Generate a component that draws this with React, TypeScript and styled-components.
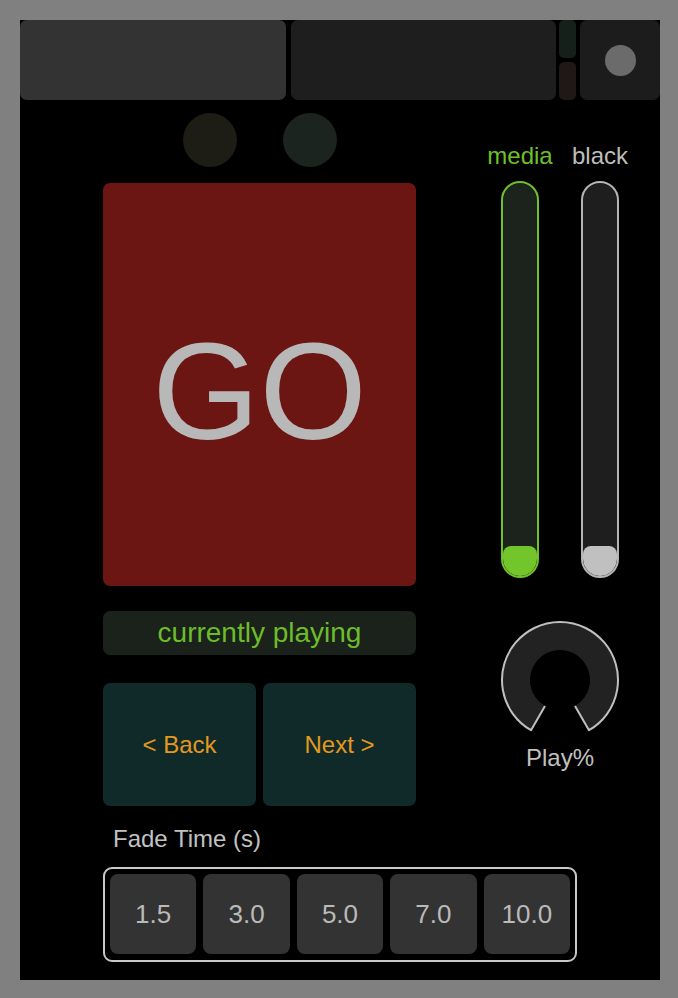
import styled, { createGlobalStyle } from "styled-components";

const GlobalStyle = createGlobalStyle`
  html, body {
    margin: 0;
    padding: 0;
    background: #808080;
  }
  body {
    font-family: "Liberation Sans", Arial, sans-serif;
  }
`;

const Panel = styled.div`
  margin: 20px;
  width: 640px;
  height: 960px;
  background: #000;
  display: flex;
  flex-direction: column;
  overflow: hidden;
`;

const TopBar = styled.div`
  display: flex;
  height: 80px;
`;

const TopBox = styled.div<{ $w: number; $bg: string; $ml?: number }>`
  width: ${(p) => p.$w}px;
  margin-left: ${(p) => p.$ml ?? 0}px;
  background: ${(p) => p.$bg};
  border-radius: 7px;
  flex-shrink: 0;
  display: flex;
  align-items: center;
  justify-content: center;
`;

const MeterStack = styled.div`
  width: 17px;
  margin-left: 3px;
  display: flex;
  flex-direction: column;
  gap: 4px;
`;

const MeterCell = styled.div<{ $bg: string }>`
  flex: 1;
  background: ${(p) => p.$bg};
  border-radius: 5px;
`;

const RecordDot = styled.div`
  width: 31px;
  height: 31px;
  border-radius: 50%;
  background: #6b6b6b;
`;

const Content = styled.div`
  display: flex;
  align-items: flex-start;
`;

const LeftCol = styled.div`
  margin-left: 83px;
  width: 313px;
  padding-top: 13px;
  display: flex;
  flex-direction: column;
`;

const Indicators = styled.div`
  display: flex;
  justify-content: center;
  gap: 46px;
`;

const Indicator = styled.div<{ $bg: string }>`
  width: 54px;
  height: 54px;
  border-radius: 50%;
  background: ${(p) => p.$bg};
`;

const GoButton = styled.button`
  margin-top: 16px;
  height: 403px;
  border: none;
  border-radius: 7px;
  background: #6b1613;
  color: #b8b8b8;
  font-family: "Liberation Sans", Arial, sans-serif;
  font-size: 138px;
  padding: 12px 0 0;
  display: flex;
  align-items: center;
  justify-content: center;
  line-height: 1;
`;

const Status = styled.div`
  margin-top: 25px;
  height: 44px;
  border-radius: 7px;
  background: #1b211b;
  color: #6cbd2a;
  font-size: 28px;
  display: flex;
  align-items: center;
  justify-content: center;
`;

const NavRow = styled.div`
  margin-top: 28px;
  height: 123px;
  display: grid;
  grid-template-columns: 1fr 1fr;
  gap: 7px;
`;

const NavButton = styled.button`
  border: none;
  border-radius: 7px;
  background: #0f2a28;
  color: #e3981f;
  font-family: "Liberation Sans", Arial, sans-serif;
  font-size: 24px;
  padding: 0;
`;

const RightCol = styled.div`
  margin-left: 85px;
  width: 118px;
  padding-top: 43px;
  display: flex;
  flex-direction: column;
  align-items: center;
`;

const FaderGrid = styled.div`
  display: grid;
  grid-template-columns: 38px 38px;
  column-gap: 42px;
`;

const FaderLabel = styled.div<{ $color: string }>`
  height: 26px;
  line-height: 26px;
  font-size: 24px;
  color: ${(p) => p.$color};
  display: flex;
  justify-content: center;
  white-space: nowrap;
`;

const Track = styled.div<{ $border: string; $bg: string }>`
  margin-top: 12px;
  height: 397px;
  box-sizing: border-box;
  border: 2px solid ${(p) => p.$border};
  background: ${(p) => p.$bg};
  border-radius: 19px;
  display: flex;
  flex-direction: column;
  justify-content: flex-end;
  overflow: hidden;
`;

const Thumb = styled.div<{ $color: string }>`
  height: 30px;
  background: ${(p) => p.$color};
  border-radius: 8px 8px 17px 17px;
`;

const Knob = styled.svg`
  margin-top: 42px;
  display: block;
`;

const KnobLabel = styled.div`
  margin-top: 4px;
  line-height: 28px;
  font-size: 24px;
  color: #c0c0c0;
`;

const FadeSection = styled.div`
  margin-left: 83px;
  margin-top: 19px;
  width: 474px;
`;

const FadeLabel = styled.div`
  padding-left: 10px;
  line-height: 28px;
  font-size: 24px;
  color: #c2c2c2;
`;

const FadeGroup = styled.div`
  margin-top: 14px;
  box-sizing: border-box;
  border: 2px solid #c8c8c8;
  border-radius: 9px;
  padding: 5px 5px 6px;
  display: grid;
  grid-template-columns: repeat(5, 1fr);
  gap: 7px;
`;

const FadeButton = styled.button`
  height: 80px;
  border: none;
  border-radius: 8px;
  background: #333333;
  color: #bababa;
  font-family: "Liberation Sans", Arial, sans-serif;
  font-size: 26px;
  padding: 0;
`;

const fadeTimes = ["1.5", "3.0", "5.0", "7.0", "10.0"];

export default function App() {
  return (
    <>
      <GlobalStyle />
      <Panel>
        <TopBar>
          <TopBox $w={266} $bg="#333333" />
          <TopBox $w={265} $ml={5} $bg="#1e1e1e" />
          <MeterStack>
            <MeterCell $bg="#142019" />
            <MeterCell $bg="#201717" />
          </MeterStack>
          <TopBox $w={80} $ml={4} $bg="#1c1c1c">
            <RecordDot />
          </TopBox>
        </TopBar>

        <Content>
          <LeftCol>
            <Indicators>
              <Indicator $bg="#1d1d15" />
              <Indicator $bg="#1b241e" />
            </Indicators>
            <GoButton>GO</GoButton>
            <Status>currently playing</Status>
            <NavRow>
              <NavButton>&lt; Back</NavButton>
              <NavButton>Next &gt;</NavButton>
            </NavRow>
          </LeftCol>

          <RightCol>
            <FaderGrid>
              <FaderLabel $color="#6ec02a">media</FaderLabel>
              <FaderLabel $color="#bdbdbd">black</FaderLabel>
              <Track $border="#6fc12b" $bg="#1c221c">
                <Thumb $color="#72c52b" />
              </Track>
              <Track $border="#b5b5b5" $bg="#1e1e1e">
                <Thumb $color="#c0c0c0" />
              </Track>
            </FaderGrid>
            <Knob width="120" height="120" viewBox="0 0 120 120">
              <path
                d="M31 110.23 A58 58 0 1 1 89 110.23 L75 85.98 A30 30 0 1 0 45 85.98 Z"
                fill="#222222"
              />
              <path
                d="M45 85.98 L31 110.23 A58 58 0 1 1 89 110.23 L75 85.98"
                fill="none"
                stroke="#c0c0c0"
                strokeWidth="2"
                strokeLinejoin="round"
              />
            </Knob>
            <KnobLabel>Play%</KnobLabel>
          </RightCol>
        </Content>

        <FadeSection>
          <FadeLabel>Fade Time (s)</FadeLabel>
          <FadeGroup>
            {fadeTimes.map((t) => (
              <FadeButton key={t}>{t}</FadeButton>
            ))}
          </FadeGroup>
        </FadeSection>
      </Panel>
    </>
  );
}
